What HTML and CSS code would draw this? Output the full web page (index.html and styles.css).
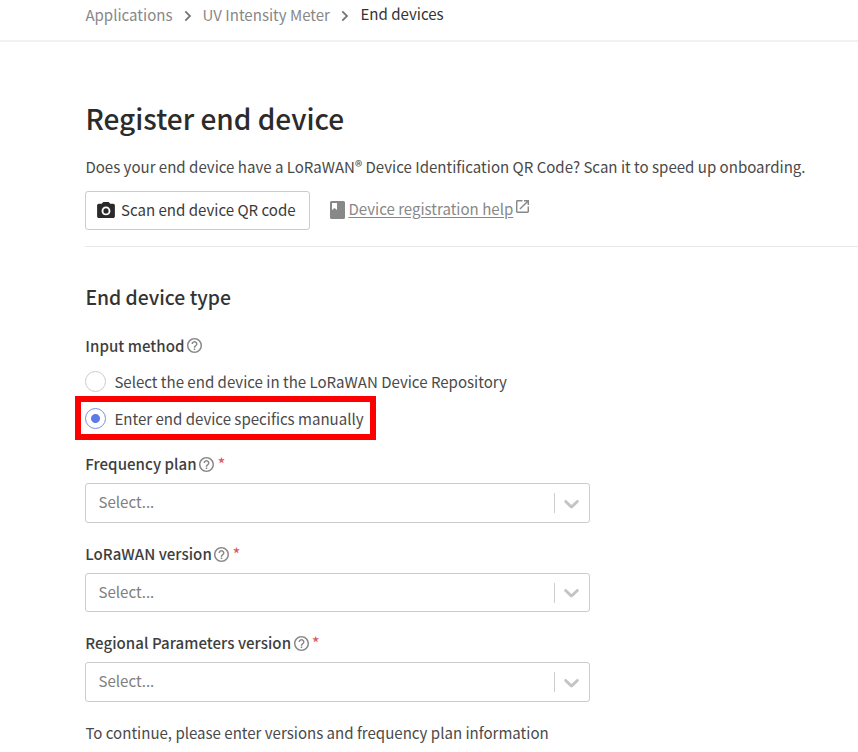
FILE: index.html
```html
<!DOCTYPE html>
<html lang="en">
<head>
<meta charset="utf-8">
<title>Register end device</title>
<link rel="stylesheet" href="styles.css">
</head>
<body>
<svg class="defs" width="0" height="0" aria-hidden="true">
  <symbol id="help" viewBox="2 2 20 20"><path fill="currentColor" d="M11 18h2v-2h-2v2zm1-16C6.480 2 2 6.480 2 12s4.480 10 10 10 10-4.480 10-10S17.520 2 12 2zm0 18c-4.410 0-8-3.590-8-8s3.590-8 8-8 8 3.590 8 8-3.590 8-8 8zm0-14c-2.210 0-4 1.790-4 4h2c0-1.100.9-2 2-2s2 .9 2 2c0 2-3 1.750-3 5h2c0-2.250 3-2.500 3-5 0-2.210-1.790-4-4-4z"/></symbol>
  <symbol id="right" viewBox="0 0 8 12"><path fill="none" stroke="currentColor" stroke-width="1.800" d="M1.300 1.300 6 6l-4.700 4.700"/></symbol>
  <symbol id="down" viewBox="4 4 12 12"><path fill="currentColor" d="M4.516 7.548c0.436-0.446 1.043-0.481 1.576 0l3.908 3.747 3.908-3.747c0.533-0.481 1.141-0.446 1.574 0 0.436 0.445 0.408 1.197 0 1.615-0.406 0.418-4.695 4.502-4.695 4.502-0.217 0.223-0.502 0.335-0.787 0.335s-0.570-0.112-0.789-0.335c0 0-4.287-4.084-4.695-4.502s-0.436-1.170 0-1.615z"/></symbol>
</svg>
<nav class="breadcrumbs">
  <a>Applications</a>
  <svg class="crumb-sep"><use href="#right"/></svg>
  <a class="app">UV Intensity Meter</a>
  <svg class="crumb-sep"><use href="#right"/></svg>
  <span class="current">End devices</span>
</nav>
<main>
  <header class="intro">
    <h1>Register end device</h1>
    <p class="lead">Does your end device have a LoRaWAN<sup>®</sup> Device Identification QR Code? Scan it to speed up onboarding.</p>
    <div class="actions">
      <button class="scan" type="button">
        <svg class="camera" viewBox="2 2 20 18"><path fill="currentColor" fill-rule="evenodd" d="M9 2 7.170 4H4c-1.100 0-2 .9-2 2v12c0 1.100.9 2 2 2h16c1.100 0 2-.9 2-2V6c0-1.100-.9-2-2-2h-3.170L15 2H9zm3 15c-2.760 0-5-2.240-5-5s2.240-5 5-5 5 2.240 5 5-2.240 5-5 5z"/><circle cx="12" cy="12" r="2.900" fill="currentColor"/></svg>
        <span>Scan end device QR code</span>
      </button>
      <a class="help-link">
        <svg class="book" viewBox="0 0 15 18"><path fill="currentColor" fill-rule="evenodd" d="M1.500 0h12A1.500 1.500 0 0 1 15 1.500v15a1.500 1.500 0 0 1-1.500 1.500h-12A1.500 1.500 0 0 1 0 16.500v-15A1.500 1.500 0 0 1 1.500 0zM2 2v7l2.500-2L7 9V2z"/></svg>
        <span>Device registration help</span>
        <svg class="external" viewBox="3 3 18 18"><path fill="currentColor" d="M19 19H5V5h7V3H5c-1.110 0-2 .9-2 2v14c0 1.100.89 2 2 2h14c1.100 0 2-.9 2-2v-7h-2v7zM14 3v2h3.590l-9.830 9.830 1.410 1.410L19 6.410V10h2V3h-7z"/></svg>
      </a>
    </div>
  </header>
  <section class="device-type">
    <h2>End device type</h2>
    <div class="label method"><span>Input method</span><svg class="tip"><use href="#help"/></svg></div>
    <label class="option"><i class="radio"></i><span>Select the end device in the LoRaWAN Device Repository</span></label>
    <label class="option highlighted"><i class="radio checked"></i><span>Enter end device specifics manually</span></label>
    <div class="field frequency">
      <div class="label"><span>Frequency plan</span><svg class="tip"><use href="#help"/></svg><b>*</b></div>
      <div class="select"><span>Select...</span><i class="divider"></i><svg class="arrow"><use href="#down"/></svg></div>
    </div>
    <div class="field version">
      <div class="label"><span>LoRaWAN version</span><svg class="tip"><use href="#help"/></svg><b>*</b></div>
      <div class="select"><span>Select...</span><i class="divider"></i><svg class="arrow"><use href="#down"/></svg></div>
    </div>
    <div class="field regional">
      <div class="label"><span>Regional Parameters version</span><svg class="tip"><use href="#help"/></svg><b>*</b></div>
      <div class="select"><span>Select...</span><i class="divider"></i><svg class="arrow"><use href="#down"/></svg></div>
    </div>
    <p class="hint">To continue, please enter versions and frequency plan information</p>
  </section>
</main>
</body>
</html>
```
FILE: styles.css
```css
* { box-sizing: border-box; }
body {
  margin: 0;
  height: 752px;
  overflow: hidden;
  background: #fff;
  color: #4a4a4a;
  font: 15.060px/20px "Noto Sans CJK SC", "Noto Sans", sans-serif;
  white-space: nowrap;
}
h1, h2, p { margin: 0; }
svg { display: block; flex: none; }
.defs { position: absolute; }
.breadcrumbs {
  display: flex;
  height: 42px;
  padding: 5px 0 0 85.400px;
  border-bottom: 2px solid #f1f1f1;
  color: #888;
}
.crumb-sep { width: 8px; height: 12px; margin: 5px 11px 0; color: #777; }
.current { margin-top: -1px; margin-left: .5px; color: #333; }
main { padding-left: 85px; }
.intro { height: 205px; padding-top: 56px; border-bottom: 1px solid #e8e8e8; }
h1 { height: 40px; padding-left: .5px; font-size: 28px; line-height: 40px; font-weight: 500; color: #2b2b2b; }
.lead { margin-top: 19px; height: 20px; padding-left: .4px; }
sup { font-size: 15px; line-height: 0; vertical-align: 1px; }
.actions { display: flex; margin-top: 14px; }
.scan {
  display: flex;
  align-items: center;
  width: 225px;
  height: 39px;
  padding: 0 0 2px 11px;
  border: 1px solid #ccc;
  border-radius: 3px;
  background: #fff;
  color: #3a3a3a;
  font: inherit;
}
.camera { width: 18px; height: 16px; margin-right: 6px; color: #2a2a2a; }
.help-link { display: flex; margin: 8px 0 0 20px; color: #888; }
.help-link span { text-decoration: underline; text-underline-offset: 2px; }
.book { width: 15px; height: 18px; margin: 2px 3.400px 0 0; }
.external { width: 13px; height: 13px; margin: 1px 0 0 3px; }
h2 { margin-top: 38px; height: 24px; padding-left: .4px; line-height: 24px; font-size: 19.350px; font-weight: 500; color: #333; }
.label { display: flex; height: 20px; padding-left: .3px; font-weight: 500; color: #3e3e3e; }
.label span { letter-spacing: .04px; }
.method { margin-top: 27px; }
.tip { width: 15px; height: 15px; margin: 2px 0 0 2.500px; color: #888; }
.field .tip { margin-top: 3px; }
.label b { margin-left: 3.200px; font-weight: 400; font-size: 17px; color: #e05560; }
.option { display: flex; align-items: center; width: max-content; height: 20px; margin-top: 15px; }
.option span { padding-top: 2px; }
.radio {
  flex: none;
  width: 21px;
  height: 21px;
  margin-right: 8.400px;
  border: 1px solid #ccc;
  border-radius: 50%;
}
.checked { border-color: #7b8fe0; background: radial-gradient(circle, #5b7be8 4px, transparent 5px); }
.highlighted {
  width: 301px;
  height: 44px;
  margin: 5px 0 0 -10px;
  padding-left: 4px;
  border: 6px solid #f00;
}
.field { width: 505px; }
.frequency { margin-top: 14px; height: 90px; }
.version { height: 89px; }
.regional { height: 90px; }
.select {
  display: flex;
  align-items: center;
  height: 40px;
  margin-top: 9px;
  padding: 0 10px 0 12.500px;
  border: 1px solid #ccc;
  border-radius: 3px;
  color: #808080;
}
.select span { padding-bottom: 2px; }
.divider { width: 1px; height: 20px; margin-left: auto; background: #ccc; }
.arrow { width: 15px; height: 15px; margin-left: 9px; color: #c4c4c4; }
.version .select { height: 39px; }
.hint { height: 20px; padding-left: .4px; }
```
